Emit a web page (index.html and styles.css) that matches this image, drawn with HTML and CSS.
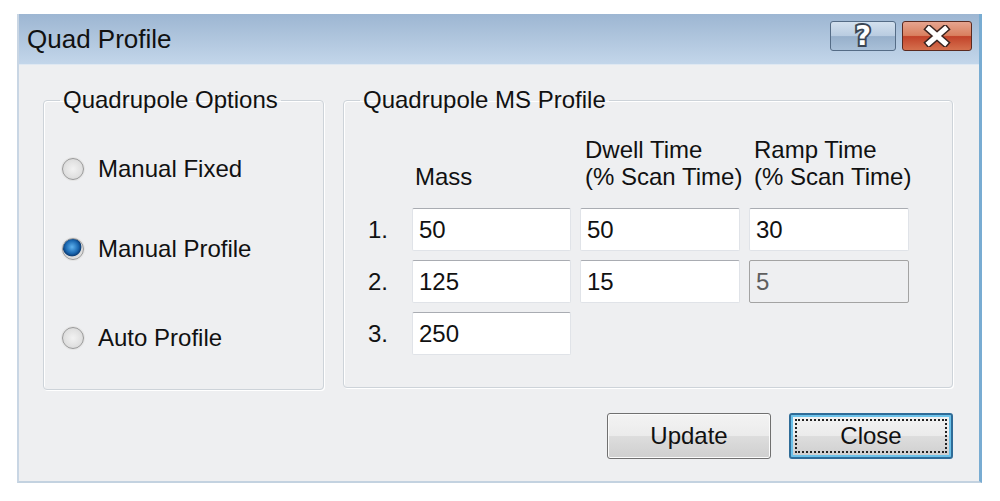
FILE: index.html
```html
<!DOCTYPE html>
<html lang="en">
<head>
  <meta charset="UTF-8">
  <title>Quad Profile</title>
  <link rel="stylesheet" href="styles.css">
</head>
<body>
  <div class="window">
    <div class="titlebar">
      <span class="title">Quad Profile</span>
      <div class="title-btns">
        <button class="tbtn help">?</button>
        <button class="tbtn close-x">
          <svg width="32" height="22" viewBox="0 0 32 22">
            <path d="M8 4 L24 18 M24 4 L8 18" stroke="#3a2420" stroke-width="8" stroke-linecap="square"/>
            <path d="M8 4 L24 18 M24 4 L8 18" stroke="#ffffff" stroke-width="5" stroke-linecap="square"/>
          </svg>
        </button>
      </div>
    </div>

    <div class="client">
      <div class="groups">
        <fieldset class="group options">
          <legend>Quadrupole Options</legend>
          <label class="radio-row"><span class="radio"></span>Manual Fixed</label>
          <label class="radio-row"><span class="radio on"></span>Manual Profile</label>
          <label class="radio-row last"><span class="radio"></span>Auto Profile</label>
        </fieldset>

        <fieldset class="group profile">
          <legend>Quadrupole MS Profile</legend>
          <div class="grid">
            <div></div>
            <div class="head mass">Mass</div>
            <div class="head">Dwell Time<br>(% Scan Time)</div>
            <div class="head">Ramp Time<br>(% Scan Time)</div>

            <div class="num">1.</div>
            <input class="box" value="50">
            <input class="box" value="50">
            <input class="box" value="30">

            <div class="num">2.</div>
            <input class="box" value="125">
            <input class="box" value="15">
            <input class="box" value="5" disabled>

            <div class="num">3.</div>
            <input class="box" value="250">
          </div>
        </fieldset>
      </div>

      <div class="actions">
        <button class="btn">Update</button>
        <button class="btn default"><span>Close</span></button>
      </div>
    </div>
  </div>
</body>
</html>
```

FILE: styles.css
```css
body { margin: 0; background: #fff; font-family: "Liberation Sans", Arial, sans-serif; font-size: 24px; color: #111; }

.window { margin: 14px 0 0 17px; width: 965px; height: 469px; box-sizing: border-box; border-left: 2px solid #c9d6e4; border-right: 3px solid #78acd2; border-bottom: 2px solid #c3d2e0; display: flex; flex-direction: column; background: #eeeff1; }

.titlebar { height: 51px; flex: none; display: flex; align-items: center; justify-content: space-between; background: linear-gradient(#9db6d2, #c3d6ea); border-bottom: 1px solid #dfe8f2; box-sizing: border-box; }
.title { padding-left: 8px; font-size: 26px; color: #111; }
.title-btns { display: flex; gap: 6px; align-self: flex-start; margin: 7px 7px 0 0; }
.tbtn { height: 30px; border-radius: 3px; padding: 0; display: flex; align-items: center; justify-content: center; }
.help { width: 66px; border: 1px solid #556c86; background: linear-gradient(#d3e0ee 0%, #b8cbe0 50%, #97b0cb 52%, #a9c0d8 100%); color: #fff; font: bold 27px "DejaVu Sans", sans-serif; line-height: 28px; -webkit-text-stroke: 4px #3b4654; paint-order: stroke fill; }
.close-x { width: 70px; border: 1px solid #5a2a20; background: linear-gradient(#e6a48f 0%, #d9805f 48%, #c2432a 52%, #d5704e 100%); }

.client { flex: 1; padding: 21px 0 0 24px; }
.groups { display: flex; gap: 19px; }

.group { margin: 0; padding: 0; border: 1px solid #cdd3d9; border-radius: 4px; box-shadow: inset 1px 1px 0 #fff, 1px 1px 0 #fff; }
.group legend { padding: 0 3px; margin-left: 16px; line-height: 28px; }

.options { width: 281px; height: 304px; box-sizing: border-box; display: flex; flex-direction: column; gap: 50px; padding-top: 40px; }
.radio-row { display: flex; align-items: center; gap: 14px; height: 30px; margin-left: 18px; }
.radio-row.last { margin-top: 9px; }
.radio { width: 20px; height: 20px; border-radius: 50%; border: 1px solid #9a9a9a; background: radial-gradient(circle, #f2f2f2 0%, #e2e2e2 55%, #cfcfcf 100%); box-shadow: 0 0 0 1px #e4e4e4; }
.radio.on { background: radial-gradient(circle at 45% 40%, #5fb2ee 0%, #1a67b0 40%, #0d3f78 55%, #d9d9d9 60%, #f0f0f0 100%); }

.profile { width: 610px; height: 302px; box-sizing: border-box; padding-top: 22px; }
.grid { display: grid; grid-template-columns: 35px 159px 160px 160px; column-gap: 9px; row-gap: 9px; align-items: center; margin-left: 24px; }
.head { align-self: end; line-height: 27px; margin-bottom: 9px; padding-left: 5px; white-space: nowrap; }
.head.mass { padding-left: 3px; }
.box { height: 43px; box-sizing: border-box; margin: 0; padding: 0 6px; font: 24px "Liberation Sans", Arial, sans-serif; color: #111; background: #fff; border: 1px solid #e0e3e8; border-top-color: #a9acb2; border-radius: 2px; }
.box:disabled { background: #eeeff1; border: 1px solid #a3a3a3; color: #5e5e5e; }

.actions { display: flex; justify-content: flex-end; gap: 18px; width: 910px; margin-top: 23px; }
.btn { width: 164px; height: 46px; box-sizing: border-box; font: 24px "Liberation Sans", Arial, sans-serif; color: #111; border: 1px solid #707070; border-radius: 3px; background: linear-gradient(#f3f3f3 0%, #ebebeb 50%, #dddddd 51%, #cfcfcf 100%); box-shadow: inset 0 0 0 1px #fbfbfb; padding: 0; }
.btn.default { border: 2px solid #2f6c98; box-shadow: inset 0 0 0 2px #6cc2ea; padding: 4px; }
.btn.default span { display: flex; align-items: center; justify-content: center; height: 100%; border: 2px dotted #222; box-sizing: border-box; }
```
